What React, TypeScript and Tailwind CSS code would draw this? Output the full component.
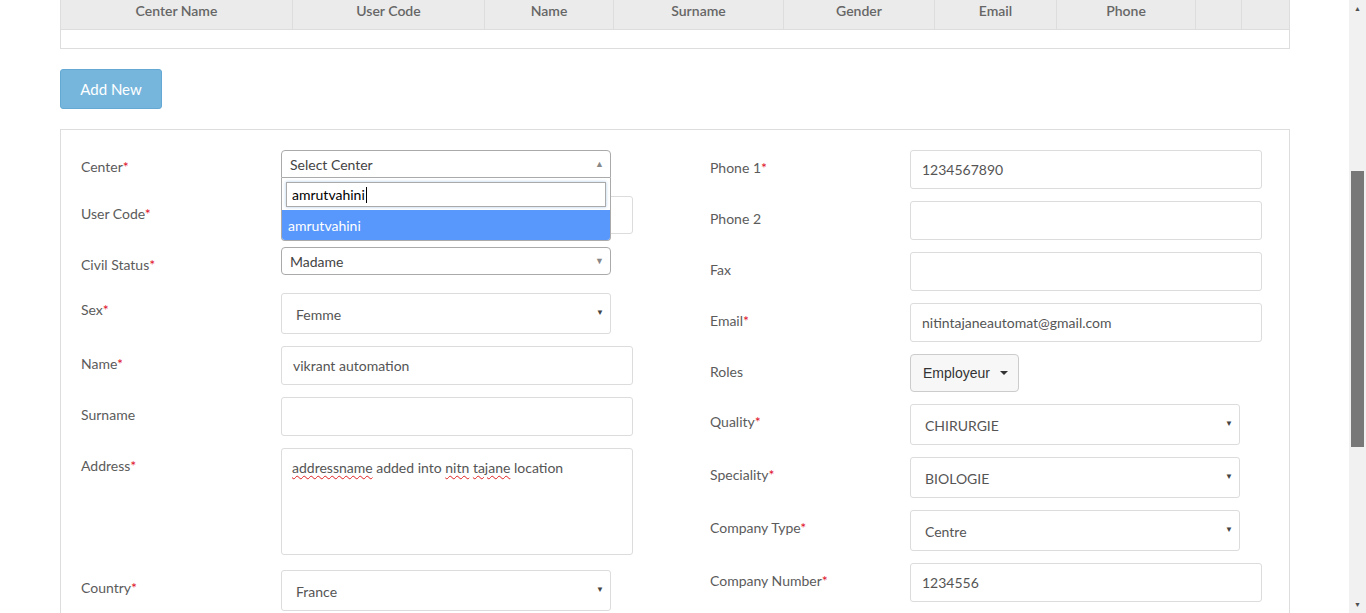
import React from "react";

const font = { fontFamily: "Lato, 'Open Sans', sans-serif" };

const columns = [
    { title: "Center Name", w: "w-[232px]" },
    { title: "User Code", w: "w-[192px]" },
    { title: "Name", w: "w-[129px]" },
    { title: "Surname", w: "w-[170px]" },
    { title: "Gender", w: "w-[151px]" },
    { title: "Email", w: "w-[122px]" },
    { title: "Phone", w: "w-[139px]" },
    { title: "", w: "w-[46px]" },
    { title: "", w: "flex-1" },
];

function Label({ text, req, pt }: { text: string; req?: boolean; pt: string }) {
    return (
        <div className={`w-[200px] shrink-0 text-[14px] leading-[20px] text-[#5b5b5b] ${pt}`}>
            {text}
            {req && <span className="text-[#e0112b]">*</span>}
        </div>
    );
}

function TextBox({ value, h = "h-[39px]", w = "w-[352px]" }: { value?: string; h?: string; w?: string }) {
    return (
        <div className={`${w} ${h} border border-[#dcdcdc] rounded-[3px] bg-white px-[11px] flex items-center text-[14px] text-[#555]`}>
            {value}
        </div>
    );
}

function NativeSelect({ value, w = "w-[330px]" }: { value: string; w?: string }) {
    return (
        <div className={`${w} h-[41px] border border-[#dcdcdc] rounded-[3px] bg-white pl-[14px] pr-[6px] flex items-center justify-between text-[14px] text-[#555]`}>
            <span className="pt-[1px]">{value}</span>
            <span className="text-[8px] text-[#444] -mt-[4px]">▼</span>
        </div>
    );
}

function Row({ mt, children }: { mt: string; children: React.ReactNode }) {
    return <div className={`flex items-start ${mt}`}>{children}</div>;
}

export default function App() {
    return (
        <div className="flex w-[1366px] h-[613px] overflow-hidden bg-white" style={font}>
            <div className="w-[1349px] shrink-0 pl-[60px] pr-[59px]">
                {/* table */}
                <div className="border-x border-b border-[#dddddd]">
                    <div className="flex h-[30px] bg-[#ebebeb] border-b border-[#dddddd]">
                        {columns.map((c, i) => (
                            <div
                                key={i}
                                className={`${c.w} ${i < columns.length - 1 ? "border-r border-[#dddddd]" : ""} text-center text-[14px] font-semibold text-[#666] leading-[22px]`}
                            >
                                {c.title}
                            </div>
                        ))}
                    </div>
                    <div className="h-[18px]" />
                </div>

                <button className="mt-[20px] w-[102px] h-[40px] rounded-[3px] bg-[#76b6dd] border border-[#64a9d4] text-white text-[15px]">
                    Add New
                </button>

                {/* form */}
                <div className="mt-[20px] border border-[#dddddd] h-[600px] pl-[20px] pt-[20px] flex">
                    <div className="w-[629px] shrink-0">
                        <Row mt="mt-0">
                            <Label text="Center" req pt="pt-[7px]" />
                            <div className="relative">
                                <div className="w-[330px] h-[28px] border border-[#aaa] rounded-t-[4px] bg-white pl-[8px] pr-[6px] flex items-center justify-between text-[14px] text-[#444]">
                                    <span>Select Center</span>
                                    <span className="text-[9px] text-[#888]">▲</span>
                                </div>
                                <div className="absolute left-0 top-[28px] z-10 w-[330px] bg-white border-x border-b border-[#aaa] rounded-b-[4px] overflow-hidden">
                                    <div className="px-[4px] pt-[4px] pb-[3px]">
                                        <div className="h-[25px] border border-[#aaa] shadow-[0_0_3px_rgba(120,170,220,0.6)] px-[5px] flex items-center text-[14px] text-black">
                                            amrutvahini<span className="inline-block w-[1px] h-[16px] bg-black ml-[1px]" />
                                        </div>
                                    </div>
                                    <div className="h-[30px] bg-[#5897fb] text-white text-[14px] px-[6px] flex items-center">
                                        amrutvahini
                                    </div>
                                </div>
                            </div>
                        </Row>
                        <Row mt="mt-[18px]">
                            <Label text="User Code" req pt="pt-[8px]" />
                            <TextBox h="h-[38px]" />
                        </Row>
                        <Row mt="mt-[13px]">
                            <Label text="Civil Status" req pt="pt-[8px]" />
                            <div className="w-[330px] h-[28px] border border-[#aaa] rounded-[4px] bg-white pl-[8px] pr-[6px] flex items-center justify-between text-[14px] text-[#444]">
                                <span>Madame</span>
                                <span className="text-[9px] text-[#888]">▼</span>
                            </div>
                        </Row>
                        <Row mt="mt-[18px]">
                            <Label text="Sex" req pt="pt-[7px]" />
                            <NativeSelect value="Femme" />
                        </Row>
                        <Row mt="mt-[12px]">
                            <Label text="Name" req pt="pt-[8px]" />
                            <TextBox value="vikrant automation" />
                        </Row>
                        <Row mt="mt-[12px]">
                            <Label text="Surname" pt="pt-[8px]" />
                            <TextBox />
                        </Row>
                        <Row mt="mt-[12px]">
                            <Label text="Address" req pt="pt-[8px]" />
                            <div className="w-[352px] h-[107px] border border-[#dcdcdc] rounded-[3px] bg-white px-[10px] pt-[9px] text-[14px] text-[#555] leading-[20px]">
                                <span className="underline decoration-wavy decoration-[#e02020] decoration-1 underline-offset-2">addressname</span>{" "}
                                added into{" "}
                                <span className="underline decoration-wavy decoration-[#e02020] decoration-1 underline-offset-2">nitn</span>{" "}
                                <span className="underline decoration-wavy decoration-[#e02020] decoration-1 underline-offset-2">tajane</span>{" "}
                                location
                            </div>
                        </Row>
                        <Row mt="mt-[15px]">
                            <Label text="Country" req pt="pt-[8px]" />
                            <NativeSelect value="France" />
                        </Row>
                    </div>

                    <div className="flex-1">
                        <Row mt="mt-0">
                            <Label text="Phone 1" req pt="pt-[8px]" />
                            <TextBox value="1234567890" />
                        </Row>
                        <Row mt="mt-[12px]">
                            <Label text="Phone 2" pt="pt-[8px]" />
                            <TextBox />
                        </Row>
                        <Row mt="mt-[12px]">
                            <Label text="Fax" pt="pt-[8px]" />
                            <TextBox />
                        </Row>
                        <Row mt="mt-[12px]">
                            <Label text="Email" req pt="pt-[8px]" />
                            <TextBox value="nitintajaneautomat@gmail.com" />
                        </Row>
                        <Row mt="mt-[12px]">
                            <Label text="Roles" pt="pt-[8px]" />
                            <div className="w-[109px] h-[38px] border border-[#cccccc] rounded-[4px] bg-[#f7f7f7] pl-[12px] pr-[10px] flex items-center justify-between text-[14px] text-[#333]" style={{ fontFamily: "Arial, 'Liberation Sans', sans-serif" }}>
                                <span>Employeur</span>
                                <span className="w-0 h-0 border-l-[4px] border-r-[4px] border-t-[4px] border-l-transparent border-r-transparent border-t-[#333]" />
                            </div>
                        </Row>
                        <Row mt="mt-[12px]">
                            <Label text="Quality" req pt="pt-[8px]" />
                            <NativeSelect value="CHIRURGIE" />
                        </Row>
                        <Row mt="mt-[12px]">
                            <Label text="Speciality" req pt="pt-[8px]" />
                            <NativeSelect value="BIOLOGIE" />
                        </Row>
                        <Row mt="mt-[12px]">
                            <Label text="Company Type" req pt="pt-[8px]" />
                            <NativeSelect value="Centre" />
                        </Row>
                        <Row mt="mt-[12px]">
                            <Label text="Company Number" req pt="pt-[8px]" />
                            <TextBox value="1234556" />
                        </Row>
                    </div>
                </div>
            </div>

            {/* scrollbar */}
            <div className="w-[17px] h-[613px] bg-[#f1f1f1] flex flex-col items-center">
                <div className="h-[17px] flex items-center justify-center text-[7px] text-[#505050]">▲</div>
                <div className="mt-[154px] w-[13px] h-[276px] bg-[#787878]" />
                <div className="flex-1" />
                <div className="h-[17px] flex items-center justify-center text-[7px] text-[#505050]">▼</div>
            </div>
        </div>
    );
}
